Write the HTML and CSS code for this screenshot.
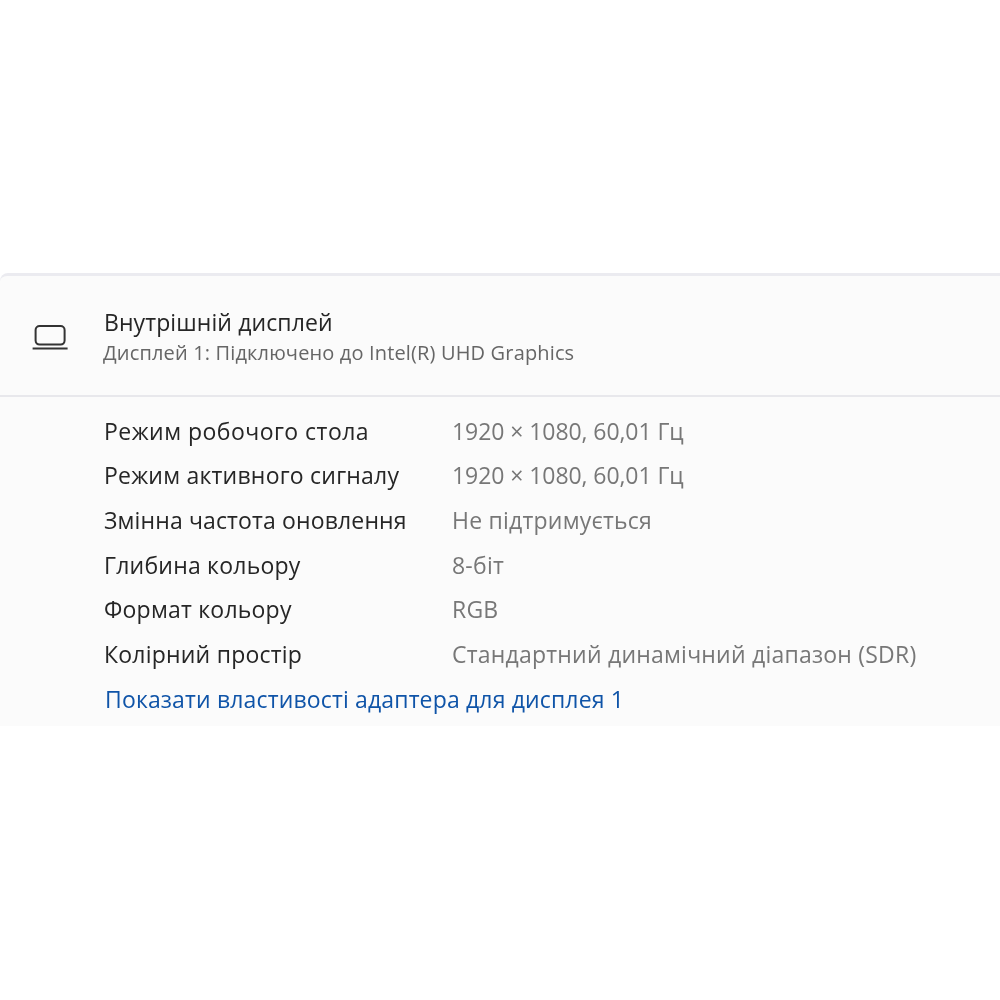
FILE: index.html
```html
<!DOCTYPE html>
<html lang="uk">
<head>
<meta charset="utf-8">
<title>Дисплей</title>
<link rel="stylesheet" href="styles.css">
</head>
<body>
<main class="card">
  <header class="head">
    <svg class="icon" width="36" height="26" viewBox="0 0 36 26" fill="none" stroke="#333" stroke-width="2">
      <rect x="3.6" y="2" width="29" height="18.6" rx="4"/>
      <path d="M0.6 24.6H35.6"/>
    </svg>
    <div class="titles">
      <div class="title">Внутрішній дисплей</div>
      <div class="sub">Дисплей 1: Підключено до Intel(R) UHD Graphics</div>
    </div>
  </header>
  <section class="body">
    <dl class="rows">
      <dt class="wide">Режим робочого стола</dt><dd class="num">1920 × 1080, 60,01 Гц</dd>
      <dt>Режим активного сигналу</dt><dd class="num">1920 × 1080, 60,01 Гц</dd>
      <dt class="tight">Змінна частота оновлення</dt><dd>Не підтримується</dd>
      <dt>Глибина кольору</dt><dd>8-біт</dd>
      <dt>Формат кольору</dt><dd>RGB</dd>
      <dt>Колірний простір</dt><dd>Стандартний динамічний діапазон (SDR)</dd>
    </dl>
    <a class="link" href="#">Показати властивості адаптера для дисплея 1</a>
  </section>
</main>
</body>
</html>
```
FILE: styles.css
```css
html, body { margin: 0; padding: 0; background: #fff; }
body { width: 1000px; height: 1000px; overflow: hidden; font-family: "Open Sans", "Noto Sans", sans-serif; padding-top: 273px; box-sizing: border-box; }
.card { height: 453px; background: #fbfbfb; border-top: 3px solid #ebebf0; border-top-left-radius: 8px; box-sizing: border-box; }
.head { height: 121px; display: flex; align-items: center; border-bottom: 2px solid #e8e8ec; padding-left: 32px; box-sizing: border-box; }
.icon { margin-right: 36px; flex: none; margin-top: 2px; }
.titles { padding-top: 4px; filter: blur(0.35px); }
.title { font-size: 23px; line-height: 30px; letter-spacing: 0.1px; color: #262626; }
.sub { font-size: 20px; line-height: 32px; letter-spacing: 0.15px; color: #666; margin-left: -1px; }
.body { padding-left: 104px; filter: blur(0.35px); }
.rows { margin: 11.5px 0 0; display: grid; grid-template-columns: 348px 1fr; grid-auto-rows: 44.6px; align-items: center; font-size: 23px; letter-spacing: 0.22px; }
dt { color: #262626; }
dt.wide { letter-spacing: 0.47px; }
dt.tight { letter-spacing: 0.14px; }
dd { margin: 0; color: #777; }
dd.num { letter-spacing: -0.07px; }
.link { display: block; margin: 0 0 0 1px; font-size: 23px; letter-spacing: 0.15px; line-height: 46.5px; color: #0f54a8; text-decoration: none; }
```
